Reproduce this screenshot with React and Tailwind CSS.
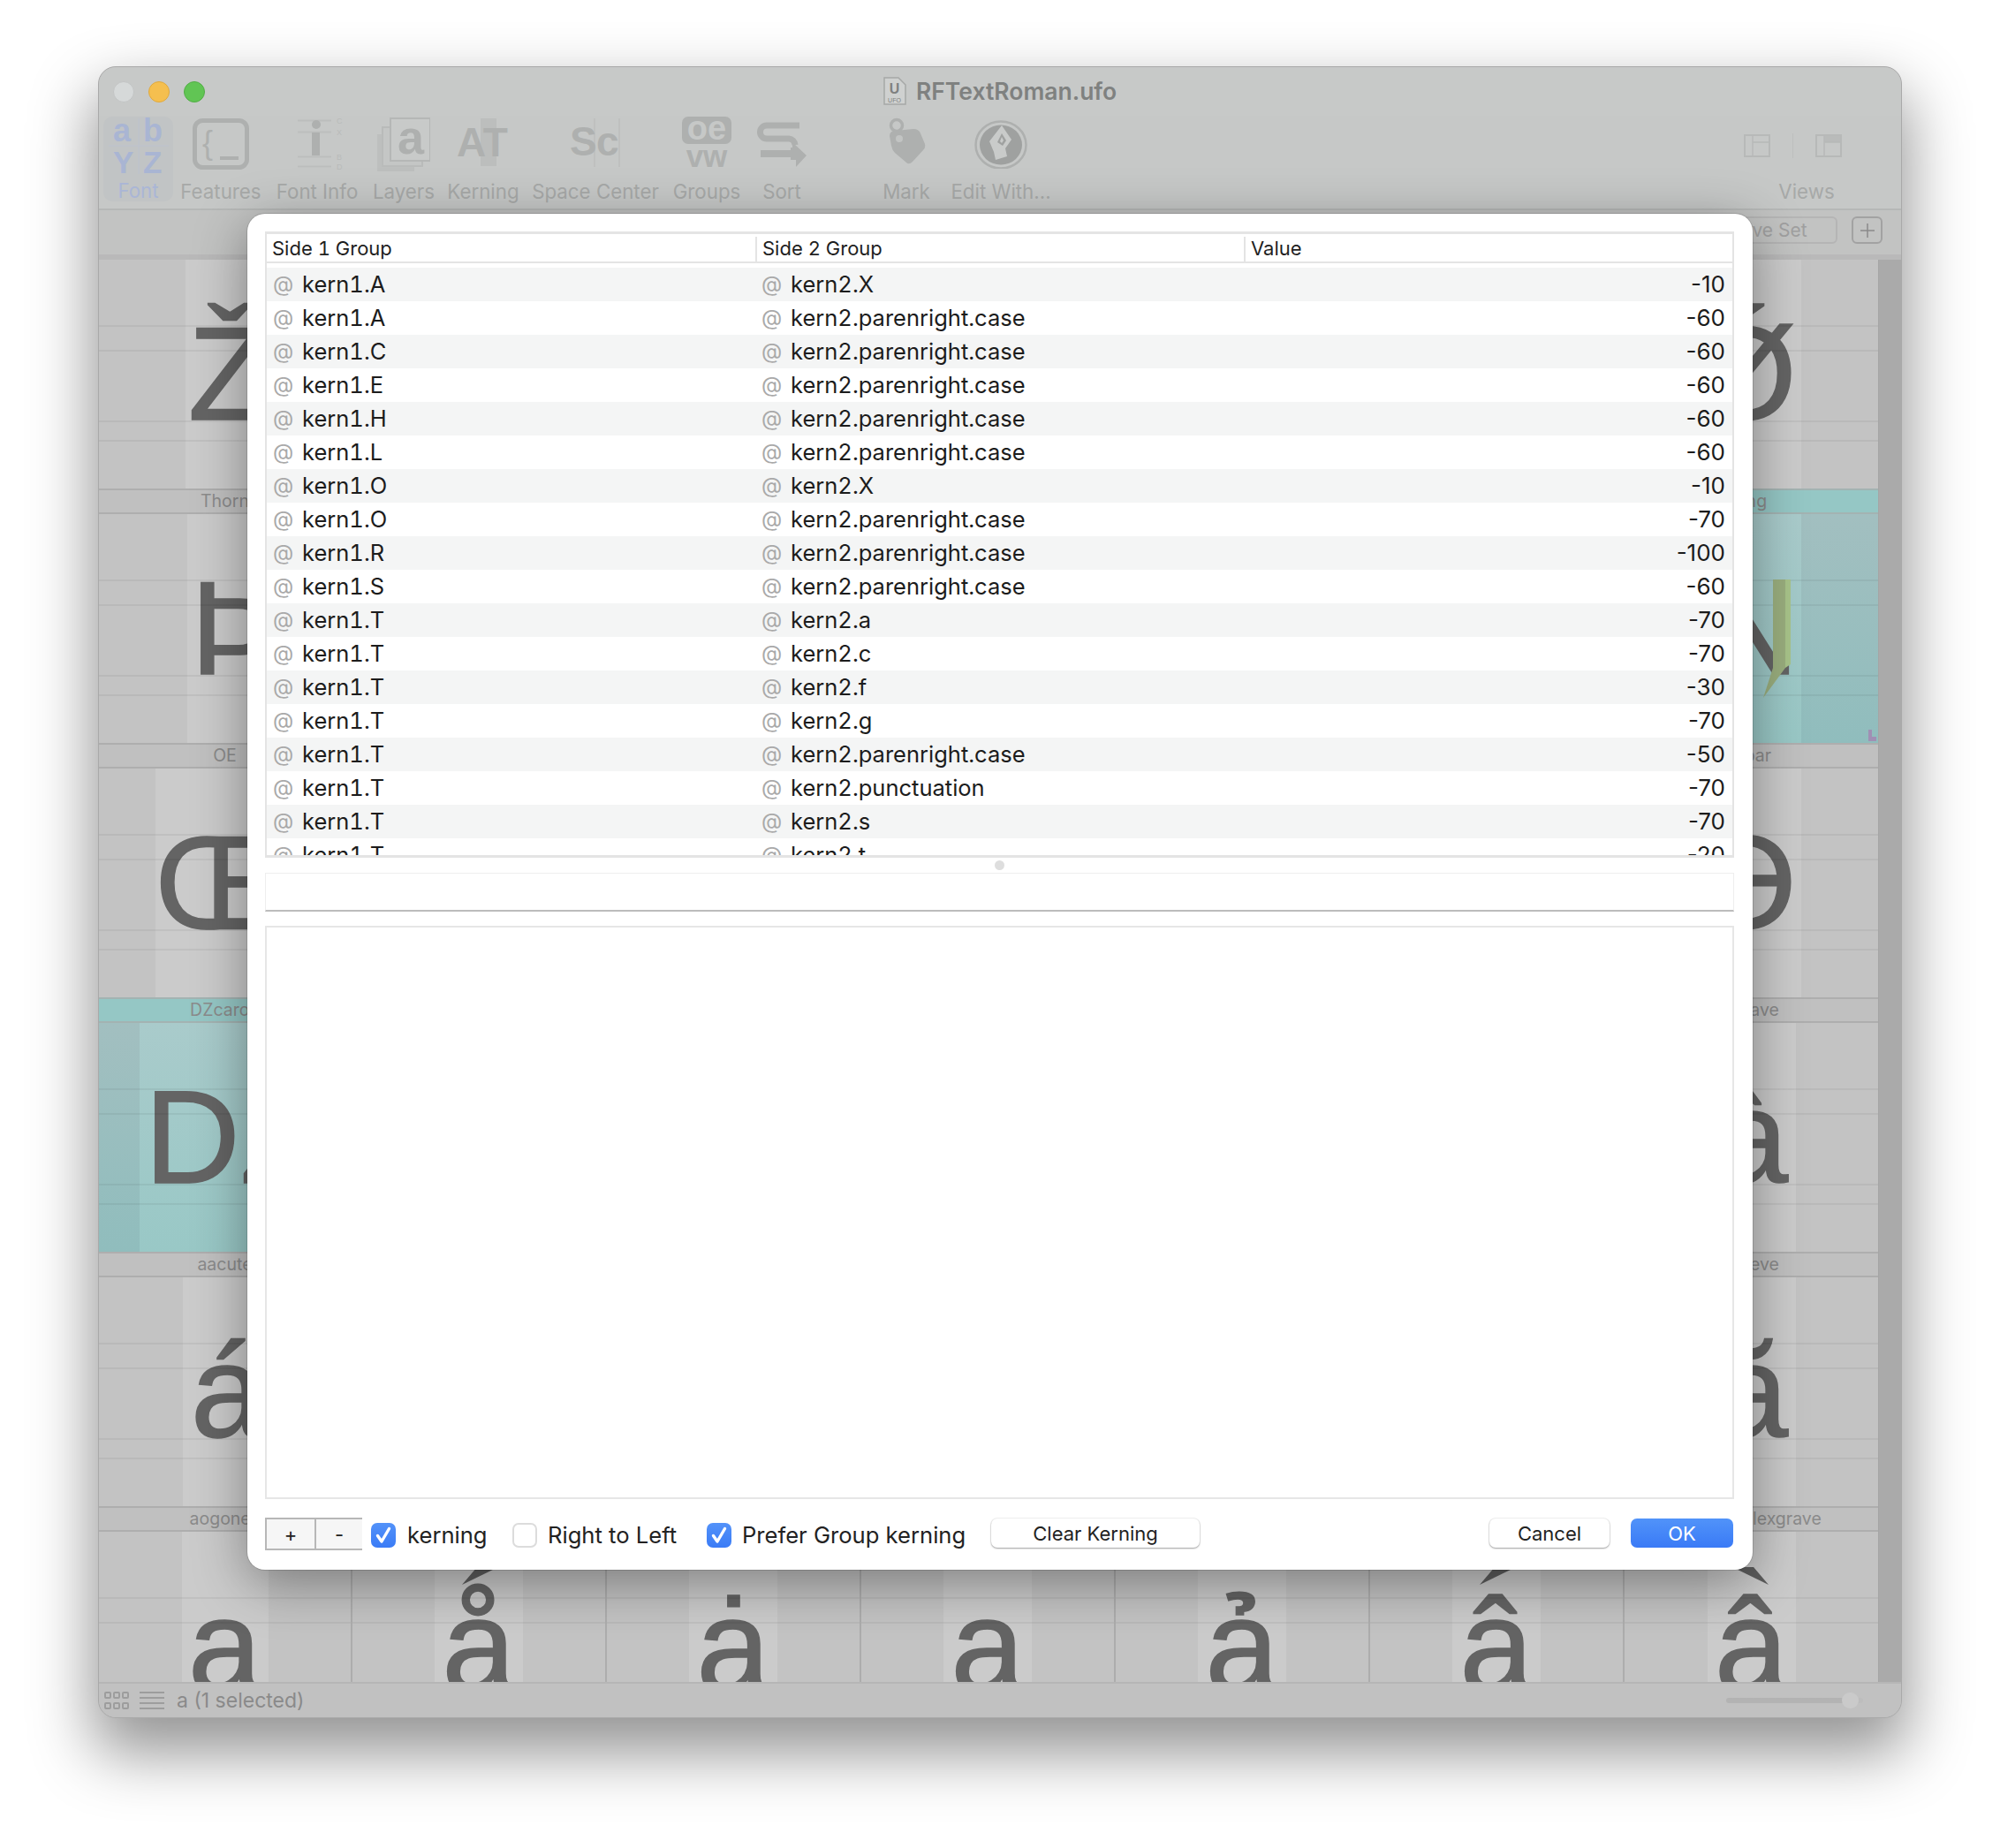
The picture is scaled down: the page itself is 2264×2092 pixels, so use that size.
import { Fragment } from 'react';

const SANS = "font-['Inter',sans-serif]";
const ICON_FONT = 'Liberation Sans, Arial, sans-serif';
const GRAY = '#aeb0af';

const KERN_ROWS = [
  ['kern1.A', 'kern2.X', '-10'],
  ['kern1.A', 'kern2.parenright.case', '-60'],
  ['kern1.C', 'kern2.parenright.case', '-60'],
  ['kern1.E', 'kern2.parenright.case', '-60'],
  ['kern1.H', 'kern2.parenright.case', '-60'],
  ['kern1.L', 'kern2.parenright.case', '-60'],
  ['kern1.O', 'kern2.X', '-10'],
  ['kern1.O', 'kern2.parenright.case', '-70'],
  ['kern1.R', 'kern2.parenright.case', '-100'],
  ['kern1.S', 'kern2.parenright.case', '-60'],
  ['kern1.T', 'kern2.a', '-70'],
  ['kern1.T', 'kern2.c', '-70'],
  ['kern1.T', 'kern2.f', '-30'],
  ['kern1.T', 'kern2.g', '-70'],
  ['kern1.T', 'kern2.parenright.case', '-50'],
  ['kern1.T', 'kern2.punctuation', '-70'],
  ['kern1.T', 'kern2.s', '-70'],
  ['kern1.T', 'kern2.t', '-20'],
];

// only the outer columns and the last row show around the sheet
const GLYPH_ROWS = [
  {
    left: { glyph: 'Ž', band: 'w-[90px]', shift: 'ml-[8px]' },
    right: { glyph: 'Ǿ', band: 'w-[112px]', shift: 'mr-[14px]' },
  },
  {
    left: { label: 'Thorn', glyph: 'Þ', band: 'w-[86px]', shift: 'ml-[22px]' },
    right: { label: 'Eng', glyph: 'N', band: 'w-[112px]', teal: true, mark: true },
  },
  {
    left: { label: 'OE', glyph: 'Œ', band: 'w-[158px]', shift: 'mr-[8px]' },
    right: { label: 'Obar', glyph: 'Ɵ', band: 'w-[112px]', shift: 'mr-[14px]' },
  },
  {
    left: { label: 'DZcaron', glyph: 'DŽ', band: 'w-[194px]', teal: true, shift: 'ml-[18px]' },
    right: { label: 'agrave', glyph: 'à', band: 'w-[100px]' },
  },
  {
    left: { label: 'aacute', glyph: 'á', band: 'w-[96px]', shift: 'ml-[6px]' },
    right: { label: 'abreve', glyph: 'ă', band: 'w-[100px]' },
  },
  {
    left: { label: 'aogonek', glyph: 'a', band: 'w-[98px]' },
    right: { label: 'acircumflexgrave', glyph: 'â', band: 'w-[100px]', accent: 'grave' },
  },
];

const LAST_ROW_MIDDLE = [
  { glyph: 'å', accent: 'acute' },
  { glyph: 'ȧ' },
  { glyph: 'a' },
  { glyph: 'ả' },
  { glyph: 'â', accent: 'acute' },
];

function GlyphCell({ cell, edge }) {
  const teal = cell?.teal;
  return (
    <div className={edge ? 'flex flex-col' : 'flex flex-col border-r-2 border-[#adadad]'}>
      {cell?.label !== undefined && (
        <div
          className={`h-[29px] flex items-center justify-center border-y-2 text-[19.5px] leading-none whitespace-nowrap overflow-hidden text-[#8b8b8b] ${
            teal ? 'bg-[#95c7c5] border-[#a3b3b2]' : 'bg-[#c0c0c0] border-[#aeaeae]'
          }`}
        >
          {cell.label}
        </div>
      )}
      <div
        className={`relative h-[259px] flex justify-center overflow-hidden ${
          teal ? 'bg-linear-to-b from-[#a2bfc0] to-[#90bdbd]' : 'bg-[#c3c3c3]'
        }`}
      >
        {cell?.glyph && (
          <div
            className={`${cell.band} h-full flex justify-center ${
              teal ? 'bg-linear-to-b from-[#a9cbcb] to-[#99c8c6]' : 'bg-[#cbcbcb]'
            }`}
          >
            <span
              className={`${cell.shift ?? ''} pt-[54px] text-[150px] leading-[150px] text-[#646464] [-webkit-text-stroke:1.5px_#646464] font-['Liberation_Sans',sans-serif] whitespace-nowrap`}
            >
              {cell.glyph}
            </span>
          </div>
        )}
        <i className="absolute inset-x-0 top-[74px] h-[2px] bg-black/5" />
        <i className="absolute inset-x-0 top-[102px] h-[2px] bg-black/5" />
        <i className="absolute inset-x-0 top-[182px] h-[2px] bg-black/5" />
        <i className="absolute inset-x-0 top-[204px] h-[2px] bg-black/5" />
        {cell?.accent === 'acute' && (
          <svg className="absolute left-0 top-0" width="288" height="70" viewBox="0 0 288 70">
            <polygon points="124,60 141,40 165,40" fill="#5e5e5e" />
          </svg>
        )}
        {cell?.accent === 'grave' && (
          <svg className="absolute left-0 top-0" width="288" height="70" viewBox="0 0 288 70">
            <polygon points="163,60 146,40 122,40" fill="#5e5e5e" />
          </svg>
        )}
        {cell?.mark && (
          <>
            <svg className="absolute left-[157px] top-[74px]" width="40" height="136" viewBox="0 0 40 136">
              <polygon points="11,0 25,0 25,100 0,134 11,100" fill="#9aae7e" />
              <polygon points="25,0 31,0 31,96 25,100" fill="#a8c48a" />
            </svg>
            <svg className="absolute right-[2px] bottom-[2px]" width="9" height="13" viewBox="0 0 9 13">
              <path d="M0 0H4V8H9V13H0Z" fill="#a08fb4" />
            </svg>
          </>
        )}
      </div>
    </div>
  );
}

function ToolItem({ label, w, children }) {
  return (
    <div className={`${w} shrink-0 flex flex-col items-center`}>
      <div className="h-[65px] flex items-start justify-center">{children}</div>
      <span className="mt-[8px] text-[22.3px] leading-[26px] whitespace-nowrap text-[#a7a9a8]">{label}</span>
    </div>
  );
}

function FontIcon() {
  return (
    <svg width="72" height="64" viewBox="0 0 72 64" fontFamily={ICON_FONT} fontWeight="700" fill="#a9b5d3">
      <path d="M36 1V64M2 32H70" stroke="#bcc2cf" strokeWidth="1" />
      <text x="7" y="27" fontSize="36">a</text>
      <text x="41" y="27" fontSize="36">b</text>
      <text x="7" y="63" fontSize="35">Y</text>
      <text x="41" y="63" fontSize="35">Z</text>
    </svg>
  );
}

function FeaturesIcon() {
  return (
    <svg width="64" height="64" viewBox="0 0 64 64" fontFamily={ICON_FONT}>
      <rect x="2.5" y="5.5" width="59" height="53" rx="9" fill="none" stroke={GRAY} strokeWidth="5" />
      <text x="11" y="43" fontSize="36" fill={GRAY}>{'{'}</text>
      <rect x="31" y="46" width="21" height="4" fill={GRAY} />
    </svg>
  );
}

function FontInfoIcon() {
  return (
    <svg width="60" height="64" viewBox="0 0 60 64" fontFamily={ICON_FONT} fontSize="9" fill="#b9bbba">
      <path d="M8 5.5H46M8 18.5H46M8 46.5H46M8 57.5H46" stroke="#bcbebd" strokeWidth="2" />
      <circle cx="29" cy="10" r="5" fill={GRAY} />
      <rect x="24" y="19" width="9" height="26" fill={GRAY} />
      <text x="52" y="9">C</text>
      <text x="52" y="22">X</text>
      <text x="52" y="50">B</text>
      <text x="52" y="61">D</text>
    </svg>
  );
}

function LayersIcon() {
  return (
    <svg width="60" height="64" viewBox="0 0 60 64" fontFamily={ICON_FONT}>
      <rect x="0" y="21" width="42" height="42" fill="#bdbfbe" />
      <rect x="6" y="13" width="45" height="44" fill="#c4c6c5" stroke="#b9bbba" strokeWidth="2" />
      <rect x="15" y="3" width="45" height="48" fill="#c8cac9" stroke="#b5b7b6" strokeWidth="2" />
      <text x="23" y="43" fontSize="54" fontWeight="700" fill={GRAY}>a</text>
    </svg>
  );
}

function KerningIcon() {
  return (
    <svg width="60" height="64" viewBox="0 0 60 64" fontFamily={ICON_FONT}>
      <rect x="27" y="3" width="18" height="54" fill="#bcbebd" />
      <text x="0" y="46" fontSize="46" fontWeight="700" fill={GRAY}>AT</text>
    </svg>
  );
}

function SpaceIcon() {
  return (
    <svg width="58" height="64" viewBox="0 0 58 64" fontFamily={ICON_FONT}>
      <path d="M28 3V58M56 3V58" stroke="#bcbebd" strokeWidth="1.5" />
      <text x="0" y="45" fontSize="46" fontWeight="700" fill={GRAY}>S</text>
      <text x="30" y="45" fontSize="46" fontWeight="700" fill={GRAY}>c</text>
    </svg>
  );
}

function GroupsIcon() {
  return (
    <svg width="56" height="60" viewBox="0 0 56 60" fontFamily={ICON_FONT} fontWeight="700" textAnchor="middle">
      <rect x="0" y="1" width="56" height="31" rx="7" fill={GRAY} />
      <text x="28" y="27" fontSize="38" fill="#c6c8c7">oe</text>
      <text x="28" y="58" fontSize="35" fill={GRAY}>vw</text>
    </svg>
  );
}

function SortIcon() {
  return (
    <svg width="56" height="60" viewBox="0 0 56 60" fill="none">
      <path d="M48 11H11a7.5 7.5 0 0 0 0 15H36a7.5 7.5 0 0 1 7 7" stroke={GRAY} strokeWidth="7" />
      <path d="M4 43H42" stroke={GRAY} strokeWidth="8" />
      <path d="M40 30L56 45L44 58V50H38V36H40Z" fill={GRAY} />
    </svg>
  );
}

function MarkIcon() {
  return (
    <svg width="44" height="56" viewBox="0 0 44 56">
      <circle cx="11" cy="11" r="6.5" fill="none" stroke={GRAY} strokeWidth="3.5" />
      <path d="M8 17L30 15Q36 15 38 20L43 32Q44 36 41 39L29 52Q25 56 22 53L9 42Q6 39 5 34L3 23Q3 18 8 17Z" fill={GRAY} />
      <circle cx="14" cy="26" r="4" fill="#c2c4c3" />
    </svg>
  );
}

function EditIcon() {
  return (
    <svg width="60" height="60" viewBox="0 0 60 60">
      <ellipse cx="30" cy="33" rx="28.5" ry="26.5" fill="none" stroke={GRAY} strokeWidth="2.5" />
      <ellipse cx="30" cy="33" rx="24" ry="22.5" fill="#9fa1a0" />
      <path d="M31 11L42 27L35 37L37 46L24 50L22 41L17 29Z" fill="#c9cbca" />
      <path d="M31 20L36 28L32 34L26 30Z" fill="#9fa1a0" />
      <path d="M31 24L33 28L31 31L29 29Z" fill="#c9cbca" />
    </svg>
  );
}

function DocIcon() {
  return (
    <svg width="26" height="32" viewBox="0 0 26 32" fontFamily={ICON_FONT} textAnchor="middle">
      <path d="M1 1H17L25 9V31H1Z" fill="#cfd1d0" stroke="#a6a8a7" strokeWidth="1.5" />
      <text x="12.5" y="19" fontSize="16" fontWeight="700" fill="#7f8180">U</text>
      <text x="12.5" y="29" fontSize="7" fill="#7f8180">UFO</text>
    </svg>
  );
}

function PanelIcon({ topShade }) {
  return (
    <svg width="30" height="26" viewBox="0 0 30 26" fill="none">
      {topShade && <rect x="10" y="1" width="19" height="8" fill="#b9bbba" />}
      <rect x="1" y="1" width="28" height="24" stroke="#b7b9b8" strokeWidth="2" />
      <path d="M10 1V25M10 9H29" stroke="#b7b9b8" strokeWidth="1.5" />
    </svg>
  );
}

function Checkbox({ checked }) {
  if (!checked) {
    return <span className="w-[28px] h-[28px] rounded-[7px] border-2 border-[#dcdcdc] bg-white" />;
  }
  return (
    <span className="w-[28px] h-[28px] rounded-[7px] bg-linear-to-b from-[#5392f9] to-[#3a7bf6] flex items-center justify-center">
      <svg width="22" height="22" viewBox="0 0 22 22" fill="none">
        <path d="M4.5 11.5L9 18L17.5 3.5" stroke="white" strokeWidth="3.4" strokeLinecap="round" strokeLinejoin="round" />
      </svg>
    </span>
  );
}

function SheetButton({ w, children }) {
  return (
    <button className={`${w} h-[33px] rounded-[7px] bg-white text-[22px] leading-[28px] text-[#222] shadow-[0_1px_2px_rgba(0,0,0,0.35),0_0_0_1px_rgba(0,0,0,0.05)]`}>
      {children}
    </button>
  );
}

export default function App() {
  return (
    <div className={`${SANS} w-[2264px] h-[2092px] bg-white pt-[75px] pl-[111px] overflow-hidden`}>
      <div className="relative w-[2042px] h-[1870px] rounded-[20px] border border-[#a9a9a9] shadow-[0_34px_70px_6px_rgba(0,0,0,0.42)] bg-[#c3c3c3]">
        <div className="h-full rounded-[20px] overflow-hidden flex flex-col">
          {/* Title bar */}
          <div className="h-[55px] shrink-0 flex items-center relative bg-[#c7c9c8]">
            <div className="ml-[16px] flex items-center gap-[16px] mt-[1px]">
              <span className="w-[24px] h-[24px] rounded-full bg-[#d6d9d9] border border-[#c2c4c4]" />
              <span className="w-[24px] h-[24px] rounded-full bg-[#f5bf4f] border border-[#dfa93e]" />
              <span className="w-[24px] h-[24px] rounded-full bg-[#61c554] border border-[#52ad46]" />
            </div>
            <div className="absolute left-[888px] top-[11px] flex items-center gap-[11px]">
              <DocIcon />
              <span className="text-[26.5px] leading-[32px] font-semibold text-[#7f8180]">RFTextRoman.ufo</span>
            </div>
          </div>

          {/* Toolbar */}
          <div className="h-[107px] shrink-0 flex bg-[#c6c8c7] border-b-2 border-[#b6b8b7]">
            <div className="w-[88px] shrink-0 pl-[5px] pt-[1px]">
              <div className="w-[79px] h-[96px] rounded-[10px] bg-[#c1c4c5] flex flex-col items-center pt-[1px]">
                <FontIcon />
                <span className="mt-[7px] text-[22.3px] leading-[24px] text-[#aab6d6]">Font</span>
              </div>
            </div>
            <ToolItem label="Features" w="w-[100px]"><FeaturesIcon /></ToolItem>
            <ToolItem label="Font Info" w="w-[118px]"><FontInfoIcon /></ToolItem>
            <ToolItem label="Layers" w="w-[78px]"><LayersIcon /></ToolItem>
            <ToolItem label="Kerning" w="w-[102px]"><KerningIcon /></ToolItem>
            <ToolItem label="Space Center" w="w-[152px]"><SpaceIcon /></ToolItem>
            <ToolItem label="Groups" w="w-[100px]"><GroupsIcon /></ToolItem>
            <ToolItem label="Sort" w="w-[70px]"><SortIcon /></ToolItem>
            <div className="w-[56px] shrink-0" />
            <ToolItem label="Mark" w="w-[100px]"><MarkIcon /></ToolItem>
            <ToolItem label="Edit With..." w="w-[114px]"><EditIcon /></ToolItem>
            <div className="flex-1" />
            <ToolItem label="Views" w="w-[110px]">
              <div className="flex items-center mt-[20px] mr-[32px]">
                <PanelIcon />
                <span className="mx-[25px] w-[1px] h-[28px] bg-[#bdbfbe]" />
                <PanelIcon topShade />
              </div>
            </ToolItem>
            <div className="w-[52px] shrink-0" />
          </div>

          {/* Search bar */}
          <div className="h-[56px] shrink-0 flex items-start bg-[#c2c3c2] border-b-[6px] border-[#b9b9b9] pt-[7px]">
            <div className="flex-1" />
            <div className="w-[156px] h-[31px] rounded-[6px] border-2 border-[#b5b5b5] flex items-center justify-center text-[21px] leading-none text-[#a0a0a0]">
              Save Set
            </div>
            <div className="ml-[16px] mr-[21px] w-[35px] h-[31px] rounded-[6px] border-2 border-[#a2a2a2] flex items-center justify-center">
              <svg width="18" height="18" viewBox="0 0 18 18"><path d="M9 1V17M1 9H17" stroke="#8a8a8a" strokeWidth="1.5" /></svg>
            </div>
          </div>

          {/* Glyph grid */}
          <div className="h-[1610px] shrink-0 flex overflow-hidden">
            <div className="w-[2014px] shrink-0 text-center">
              {GLYPH_ROWS.map((row, i) => (
                <div key={i} className="grid grid-cols-[287px_repeat(5,288px)_287px]">
                  <GlyphCell cell={row.left} />
                  {LAST_ROW_MIDDLE.map((item, c) => (
                    <GlyphCell
                      key={c}
                      cell={{
                        label: i === 0 ? undefined : '',
                        glyph: i === 5 ? item.glyph : undefined,
                        accent: i === 5 ? item.accent : undefined,
                        band: 'w-[100px]',
                      }}
                    />
                  ))}
                  <GlyphCell cell={row.right} edge />
                </div>
              ))}
            </div>
            <div className="flex-1 bg-[#aaaaaa] border-l border-[#a5a5a5]" />
          </div>

          {/* Status bar */}
          <div className="flex-1 flex items-center bg-[#c1c1c1] border-t-2 border-[#b6b6b6]">
            <svg className="ml-[6px]" width="28" height="20" viewBox="0 0 28 20" fill="none" stroke="#9d9d9d" strokeWidth="2">
              <rect x="1" y="1" width="6" height="6" rx="1" />
              <rect x="11" y="1" width="6" height="6" rx="1" />
              <rect x="21" y="1" width="6" height="6" rx="1" />
              <rect x="1" y="13" width="6" height="6" rx="1" />
              <rect x="11" y="13" width="6" height="6" rx="1" />
              <rect x="21" y="13" width="6" height="6" rx="1" />
            </svg>
            <svg className="ml-[12px]" width="28" height="20" viewBox="0 0 28 20" fill="none" stroke="#9d9d9d" strokeWidth="2">
              <path d="M0 1H28M0 7H28M0 13H28M0 19H28" />
            </svg>
            <span className="ml-[14px] text-[23px] leading-none text-[#8a8a8a]">a (1 selected)</span>
            <div className="flex-1" />
            <div className="relative mr-[43px] w-[155px] h-[6px] rounded-full bg-linear-to-r from-[#b3b3b3] from-[85%] to-[#bdbdbd] to-[85%]">
              <span className="absolute left-[131px] top-[-6px] w-[19px] h-[18px] rounded-full bg-[#cacaca]" />
            </div>
          </div>
        </div>

        {/* Kerning sheet */}
        <div className="absolute left-[168px] top-[166px] w-[1704px] h-[1535px] rounded-[20px] bg-white pl-[20px] pr-[21px] pt-[20px] flex flex-col shadow-[0_14px_60px_rgba(0,0,0,0.38),0_0_0_1px_rgba(0,0,0,0.12)]">
          <div className="h-[709px] shrink-0 flex flex-col overflow-hidden border-x-2 border-y-[3px] border-[#e4e4e4]">
            <div className="h-[33px] shrink-0 grid grid-cols-[553px_553px_1fr] text-[22px] leading-[26px] tabular-nums text-[#1f1f1f] border-b-2 border-[#e4e4e4]">
              {['Side 1 Group', 'Side 2 Group', 'Value'].map((title, i) => (
                <div key={title} className={`flex items-center pl-[6px] pb-[2px] ${i > 0 ? 'border-l-2 border-[#e4e4e4] my-[3px]' : ''}`}>
                  {title}
                </div>
              ))}
            </div>
            <div className="pt-[5px]">
              {KERN_ROWS.map(([side1, side2, value], i) => (
                <div
                  key={i}
                  className={`h-[38px] grid grid-cols-[553px_553px_1fr] items-center text-[25.5px] leading-[38px] text-[#1c1c1c] ${
                    i % 2 === 0 ? 'bg-[#f4f5f5]' : 'bg-white'
                  }`}
                >
                  {[side1, side2].map((name, n) => (
                    <Fragment key={n}>
                      <div className="flex items-center pl-[7px]">
                        <span className="w-[33px] text-[#a9a9a9] text-[24px]">@</span>
                        <span className="tabular-nums">{name}</span>
                      </div>
                    </Fragment>
                  ))}
                  <div className="text-right pr-[8px] text-[26px]">{value}</div>
                </div>
              ))}
            </div>
          </div>

          <div className="h-[17px] shrink-0 flex items-center justify-center">
            <span className="w-[11px] h-[11px] rounded-full bg-[#dedede]" />
          </div>
          <div className="h-[44px] shrink-0 border border-[#eeeeee] border-b-2 border-b-[#bcbcbc]" />
          <div className="mt-[16px] h-[649px] shrink-0 border-2 border-[#e6e6e6]" />

          <div className="mt-[19px] mr-[1px] flex items-center text-[25.6px] leading-[30px] text-[#222]">
            <div className="mt-[2px] w-[110px] h-[37px] flex border-y-2 border-l-2 border-[#b7b7b7] bg-[#f6f6f6] text-[22px] leading-none">
              <span className="w-[56px] flex items-center justify-center border-r-2 border-[#b7b7b7]">+</span>
              <span className="flex-1 flex items-center justify-center">-</span>
            </div>
            <span className="ml-[10px] mt-[4px] flex items-center"><Checkbox checked /></span>
            <span className="ml-[13px] mt-[4px] w-[87px] whitespace-nowrap">kerning</span>
            <span className="ml-[32px] mt-[4px] flex items-center"><Checkbox /></span>
            <span className="ml-[12px] mt-[4px] w-[148px] whitespace-nowrap">Right to Left</span>
            <span className="ml-[32px] mt-[4px] flex items-center"><Checkbox checked /></span>
            <span className="ml-[12px] mt-[4px] w-[251px] whitespace-nowrap">Prefer Group kerning</span>
            <span className="ml-[31px] flex"><SheetButton w="w-[236px]">Clear Kerning</SheetButton></span>
            <span className="ml-auto flex"><SheetButton w="w-[136px]">Cancel</SheetButton></span>
            <button className="ml-[24px] w-[116px] h-[33px] rounded-[7px] bg-linear-to-b from-[#5193f9] to-[#3a7af6] text-[22px] leading-[28px] text-white">
              OK
            </button>
          </div>
        </div>
      </div>
    </div>
  );
}
